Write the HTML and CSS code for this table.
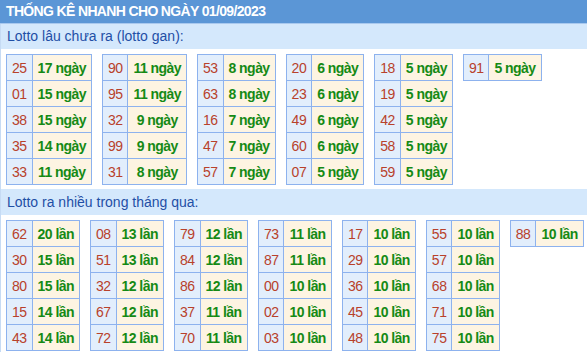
FILE: index.html
```html
<!DOCTYPE html>
<html lang="vi">
<head>
<meta charset="utf-8">
<title>Thống kê nhanh</title>
<link rel="stylesheet" href="styles.css">
</head>
<body>
<div class="header">THỐNG KÊ NHANH CHO NGÀY 01/09/2023</div>
<div class="wrap">
  <div class="band">Lotto lâu chưa ra (lotto gan):</div>
  <div class="tables">
    <table><tr><td class="n">25</td><td class="v">17 ngày</td></tr><tr><td class="n">01</td><td class="v">15 ngày</td></tr><tr><td class="n">38</td><td class="v">15 ngày</td></tr><tr><td class="n">35</td><td class="v">14 ngày</td></tr><tr><td class="n">33</td><td class="v">11 ngày</td></tr></table>
    <table><tr><td class="n">90</td><td class="v">11 ngày</td></tr><tr><td class="n">95</td><td class="v">11 ngày</td></tr><tr><td class="n">32</td><td class="v">9 ngày</td></tr><tr><td class="n">99</td><td class="v">9 ngày</td></tr><tr><td class="n">31</td><td class="v">8 ngày</td></tr></table>
    <table><tr><td class="n">53</td><td class="v">8 ngày</td></tr><tr><td class="n">63</td><td class="v">8 ngày</td></tr><tr><td class="n">16</td><td class="v">7 ngày</td></tr><tr><td class="n">47</td><td class="v">7 ngày</td></tr><tr><td class="n">57</td><td class="v">7 ngày</td></tr></table>
    <table><tr><td class="n">20</td><td class="v">6 ngày</td></tr><tr><td class="n">23</td><td class="v">6 ngày</td></tr><tr><td class="n">49</td><td class="v">6 ngày</td></tr><tr><td class="n">60</td><td class="v">6 ngày</td></tr><tr><td class="n">07</td><td class="v">5 ngày</td></tr></table>
    <table><tr><td class="n">18</td><td class="v">5 ngày</td></tr><tr><td class="n">19</td><td class="v">5 ngày</td></tr><tr><td class="n">42</td><td class="v">5 ngày</td></tr><tr><td class="n">58</td><td class="v">5 ngày</td></tr><tr><td class="n">59</td><td class="v">5 ngày</td></tr></table>
    <table><tr><td class="n">91</td><td class="v">5 ngày</td></tr></table>
  </div>
  <div class="band band2">Lotto ra nhiều trong tháng qua:</div>
  <div class="tables">
    <table><tr><td class="n">62</td><td class="v">20 lần</td></tr><tr><td class="n">30</td><td class="v">15 lần</td></tr><tr><td class="n">80</td><td class="v">15 lần</td></tr><tr><td class="n">15</td><td class="v">14 lần</td></tr><tr><td class="n">43</td><td class="v">14 lần</td></tr></table>
    <table><tr><td class="n">08</td><td class="v">13 lần</td></tr><tr><td class="n">51</td><td class="v">13 lần</td></tr><tr><td class="n">32</td><td class="v">12 lần</td></tr><tr><td class="n">67</td><td class="v">12 lần</td></tr><tr><td class="n">72</td><td class="v">12 lần</td></tr></table>
    <table><tr><td class="n">79</td><td class="v">12 lần</td></tr><tr><td class="n">84</td><td class="v">12 lần</td></tr><tr><td class="n">86</td><td class="v">12 lần</td></tr><tr><td class="n">37</td><td class="v">11 lần</td></tr><tr><td class="n">70</td><td class="v">11 lần</td></tr></table>
    <table><tr><td class="n">73</td><td class="v">11 lần</td></tr><tr><td class="n">87</td><td class="v">11 lần</td></tr><tr><td class="n">00</td><td class="v">10 lần</td></tr><tr><td class="n">02</td><td class="v">10 lần</td></tr><tr><td class="n">03</td><td class="v">10 lần</td></tr></table>
    <table><tr><td class="n">17</td><td class="v">10 lần</td></tr><tr><td class="n">29</td><td class="v">10 lần</td></tr><tr><td class="n">36</td><td class="v">10 lần</td></tr><tr><td class="n">45</td><td class="v">10 lần</td></tr><tr><td class="n">48</td><td class="v">10 lần</td></tr></table>
    <table><tr><td class="n">55</td><td class="v">10 lần</td></tr><tr><td class="n">57</td><td class="v">10 lần</td></tr><tr><td class="n">68</td><td class="v">10 lần</td></tr><tr><td class="n">71</td><td class="v">10 lần</td></tr><tr><td class="n">75</td><td class="v">10 lần</td></tr></table>
    <table><tr><td class="n">88</td><td class="v">10 lần</td></tr></table>
  </div>
</div>
</body>
</html>
```
FILE: styles.css
```css
html, body {
  margin: 0;
  padding: 0;
  background: #ffffff;
  font-family: "Liberation Sans", Arial, sans-serif;
}
.header {
  height: 23px;
  line-height: 23px;
  padding-left: 6px;
  background: #5b96d6;
  color: #ffffff;
  font-size: 14px;
  letter-spacing: -0.65px;
  font-weight: bold;
  border-bottom: 1px solid #a9c9ef;
  white-space: nowrap;
}
.wrap {
  border-left: 1px solid #c6dbf4;
}
.band {
  height: 25px;
  line-height: 25px;
  padding-left: 6px;
  background: #d4e8fc;
  color: #1f4fa6;
  font-size: 14px;
}
.band2 {
  height: 26px;
  line-height: 26px;
}
.tables {
  display: flex;
  align-items: flex-start;
  gap: 10px;
  padding: 5px 0 4px 5px;
}
table {
  border-collapse: collapse;
  font-size: 14px;
  letter-spacing: -0.5px;
}
td {
  border: 1px solid #8db2ee;
  height: 26px;
  padding: 0 5px;
  text-align: center;
  white-space: nowrap;
  box-sizing: border-box;
}
td.n {
  background: #e2eefc;
  color: #b8412b;
}
td.v {
  background: #fdf4e2;
  color: #158a15;
  font-weight: bold;
  letter-spacing: -0.55px;
}
```
